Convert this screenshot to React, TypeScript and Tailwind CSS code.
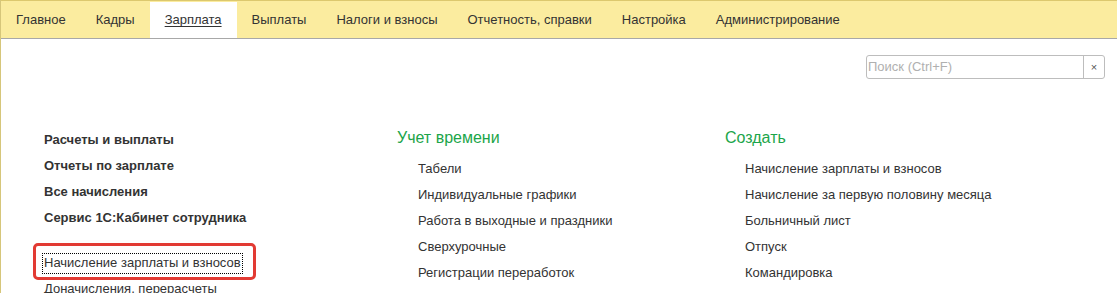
import React from "react";

const tabs = [
  "Главное",
  "Кадры",
  "Зарплата",
  "Выплаты",
  "Налоги и взносы",
  "Отчетность, справки",
  "Настройка",
  "Администрирование",
];

const timeItems = [
  "Табели",
  "Индивидуальные графики",
  "Работа в выходные и праздники",
  "Сверхурочные",
  "Регистрации переработок",
];

const createItems = [
  "Начисление зарплаты и взносов",
  "Начисление за первую половину месяца",
  "Больничный лист",
  "Отпуск",
  "Командировка",
];

const boldItems = [
  "Расчеты и выплаты",
  "Отчеты по зарплате",
  "Все начисления",
  "Сервис 1С:Кабинет сотрудника",
];

export default function App() {
  return (
    <div
      className="w-[1117px] h-[293px] overflow-hidden bg-white border-l border-[#d6c67a] text-[13px] text-[#333]"
      style={{ fontFamily: '"Liberation Sans", Arial, sans-serif' }}
    >
      {/* Tab bar */}
      <div className="h-[39px] flex bg-[#fbec9f] border-t border-[#dcc86e] border-b border-b-[#a8a8a8]">
        {tabs.map((t) =>
          t === "Зарплата" ? (
            <div key={t} className="self-end h-[36px] px-[15px] flex items-center bg-white underline underline-offset-2">
              {t}
            </div>
          ) : (
            <div key={t} className="px-[15px] flex items-center">
              {t}
            </div>
          )
        )}
      </div>

      {/* Search */}
      <div className="flex justify-end pt-4 pr-[12px]">
        <div className="w-[239px] h-[24px] flex border border-[#bdbdbd] rounded-[3px]">
          <div className="flex-1 flex items-center pl-[1px] text-[#b0b0b0]">Поиск (Ctrl+F)</div>
          <div className="w-[21px] flex items-center justify-center border-l border-[#bdbdbd] text-[11px] text-[#555]">
            ×
          </div>
        </div>
      </div>

      {/* Columns */}
      <div className="flex pt-[48px] pl-[43px]">
        <div className="w-[353px]">
          {boldItems.map((i) => (
            <div key={i} className="leading-[26px] font-bold">
              {i}
            </div>
          ))}
          <div className="mt-[19px] leading-[26px]">
            <span className="relative inline-block">
              Начисление зарплаты и взносов
              <span className="absolute -left-[2px] -right-[2px] top-[3px] bottom-[2px] border border-dotted border-black" />
              <span className="absolute -left-[11px] -right-[15px] -top-[7px] -bottom-[4px] border-[3px] border-[#e23a33] rounded-[5px]" />
            </span>
          </div>
          <div className="leading-[26px]">Доначисления, перерасчеты</div>
        </div>

        <div className="w-[328px]">
          <div className="text-[16px] leading-[22px] text-[#1ca54a] mb-[7px]">Учет времени</div>
          <div className="pl-[21px]">
            {timeItems.map((i) => (
              <div key={i} className="leading-[26px]">
                {i}
              </div>
            ))}
          </div>
        </div>

        <div className="flex-1">
          <div className="text-[16px] leading-[22px] text-[#1ca54a] mb-[7px]">Создать</div>
          <div className="pl-[20px]">
            {createItems.map((i) => (
              <div key={i} className="leading-[26px]">
                {i}
              </div>
            ))}
          </div>
        </div>
      </div>
    </div>
  );
}
